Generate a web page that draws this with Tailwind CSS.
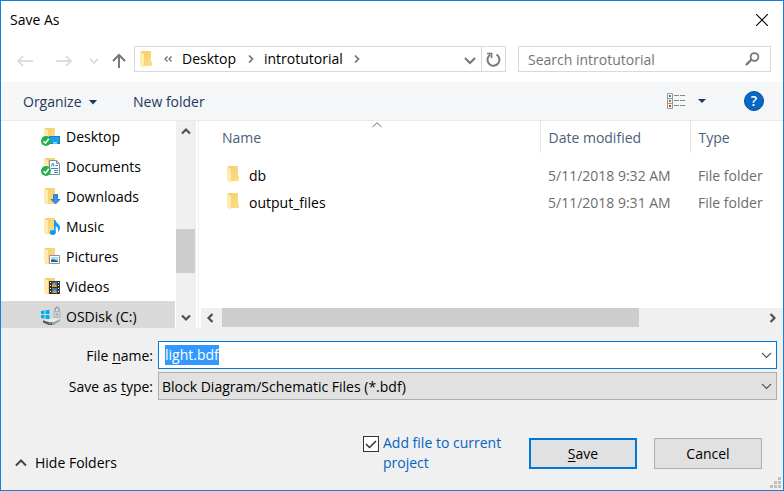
<!DOCTYPE html>
<html lang="en">
<head>
<meta charset="utf-8">
<title>Save As</title>
<script src="https://cdn.jsdelivr.net/npm/@tailwindcss/browser@4"></script>
</head>
<body class="font-['Open_Sans','Noto_Sans',sans-serif] text-sm leading-5 text-black">
<svg class="absolute size-0" aria-hidden="true">
  <defs>
    <linearGradient id="gold" x1="0" y1="0" x2="1" y2="1"><stop offset="0" stop-color="#f0cd6c"/><stop offset="1" stop-color="#ffe08a"/></linearGradient>
    <symbol id="folder" viewBox="0 0 12 17"><path d="M1 0H11V10L12 11V15H1Z" fill="url(#gold)"/><path d="M0 0.500L4 3V17L0 14.500Z" fill="#ffeab0"/></symbol>
    <symbol id="side-folder" viewBox="0 0 20 20"><path d="M4 2H14V18H4Z" fill="url(#gold)"/><path d="M3 2L7 4.500V18.500L3 16Z" fill="#ffeab0"/></symbol>
    <symbol id="synced" viewBox="0 0 20 20"><circle cx="5" cy="15" r="5" fill="#27ae4d"/><path d="M2.500 15.200L4.500 17.200L7.800 12.700" fill="none" stroke="#fff" stroke-width="1.500"/></symbol>
  </defs>
</svg>
<main class="flex min-h-screen flex-col border border-[#1a7fd4] bg-white">
  <header class="flex h-[38px] items-center justify-between pr-[11px] pl-[9px]">
    <h1>Save As</h1>
    <button aria-label="Close" class="p-1"><svg class="size-3" viewBox="0 0 12 12" fill="none" stroke="#000" stroke-width="1.1"><path d="M0 0L12 12M12 0L0 12"/></svg></button>
  </header>

  <nav class="flex h-[43px] items-start gap-3 pt-[7px] pr-3 pl-4">
    <div class="flex h-[26px] shrink-0 items-center pt-1">
      <button aria-label="Back"><svg width="16" height="12" viewBox="0 0 16 12" fill="none" stroke="#dcdcdc" stroke-width="1.800"><path d="M16 6H1M6 1L1 6L6 11"/></svg></button>
      <button aria-label="Forward" class="ml-[23px]"><svg width="16" height="12" viewBox="0 0 16 12" fill="none" stroke="#dcdcdc" stroke-width="1.800"><path d="M0 6H15M10 1L15 6L10 11"/></svg></button>
      <button aria-label="Recent locations" class="ml-[17px]"><svg width="10" height="6" viewBox="0 0 10 6" fill="none" stroke="#dcdcdc" stroke-width="1.800"><path d="M1 1L5 5L9 1"/></svg></button>
    </div>
    <div class="flex flex-1 items-center gap-2">
      <button aria-label="Up" class="pt-1 pl-px"><svg width="14" height="16" viewBox="0 0 14 16" fill="none" stroke="#777" stroke-width="2"><path d="M7 15V2M1 8L7 2L13 8"/></svg></button>
      <div class="flex h-[26px] flex-1 border border-[#d9d9d9]">
        <div class="flex flex-1 items-center pl-[5px]">
          <svg width="12" height="17"><use href="#folder"/></svg>
          <button aria-label="Parent folders" class="ml-3"><svg width="8" height="6" viewBox="0 0 8 6" fill="none" stroke="#666" stroke-width="1.200"><path d="M3.500 0.500L1 3L3.500 5.500M7.500 0.500L5 3L7.500 5.500"/></svg></button>
          <a href="#" class="ml-[10px] w-[66px]">Desktop</a>
          <svg width="6" height="8" viewBox="0 0 6 8" fill="none" stroke="#777" stroke-width="1.700"><path d="M1 0.500L4.500 4L1 7.500"/></svg>
          <a href="#" class="ml-[10px] w-[90px]">introtutorial</a>
          <svg width="6" height="8" viewBox="0 0 6 8" fill="none" stroke="#777" stroke-width="1.700"><path d="M1 0.500L4.500 4L1 7.500"/></svg>
        </div>
        <button aria-label="Previous locations" class="px-[5px] pt-1"><svg width="12" height="8" viewBox="0 0 12 8" fill="none" stroke="#777" stroke-width="2"><path d="M1 1L6 6L11 1"/></svg></button>
        <button aria-label="Refresh" class="border-l border-[#d9d9d9] px-1"><svg width="15" height="15" viewBox="0 0 15 15" fill="none" stroke="#777" stroke-width="2"><path d="M10.500 2.500A6 6 0 1 1 4 2.800"/><path d="M1 1.500H5.500V6" stroke-width="1.700"/></svg></button>
      </div>
    </div>
    <label class="flex h-[26px] w-[253px] shrink-0 items-center border border-[#d9d9d9] pr-[10px] pl-[9px]">
      <input type="search" aria-label="Search introtutorial" placeholder="Search introtutorial" class="min-w-0 flex-1 pt-0.5 outline-none placeholder:text-[#757575]">
      <svg width="15" height="14" viewBox="0 0 15 14" fill="none" stroke="#777"><circle cx="9.500" cy="5" r="3.900" stroke-width="1.800"/><path d="M6.500 7.500L1 13" stroke-width="2.400"/></svg>
    </label>
  </nav>

  <div class="flex h-[39px] items-center border-b border-[#e8e9ea] bg-[#f5f6f7] pr-[19px] pl-[22px] text-[#1e395b]">
    <button class="flex w-[74px] items-center justify-between pt-0.5">Organize <svg width="8" height="5" viewBox="0 0 8 5" fill="#1e395b"><path d="M0 0H8L4 4.500Z"/></svg></button>
    <button class="ml-9 pt-0.5">New folder</button>
    <button aria-label="Change view" class="ml-auto"><svg width="19" height="17" viewBox="0 0 19 17" fill="none"><path d="M0.500 0.500H5.500V15.500H0.500ZM0.500 5.500H5.500M0.500 10.500H5.500" stroke="#999"/><path d="M7 2.500H12M13 2.500H18M7 7.500H12M13 7.500H18M7 12.500H12M13 12.500H18" stroke="#888"/><path d="M2 2H4V4H2Z" fill="#3183b9"/><path d="M2 7H4V9H2Z" fill="#897b24"/><path d="M2 12H4V14H2Z" fill="#cf3b22"/></svg></button>
    <button aria-label="More view options" class="ml-3"><svg width="8" height="4" viewBox="0 0 8 4" fill="#1e395b"><path d="M0 0H8L4 4Z"/></svg></button>
    <button aria-label="Help" class="ml-[38px] size-5 rounded-full border border-[#07519b] bg-[#0767c5] text-center text-sm leading-[18px] font-semibold text-white">?</button>
  </div>

  <section class="flex h-[207px]">
    <ul class="w-[174px] shrink-0 overflow-hidden">
      <li class="flex h-[30px] items-center gap-[5px] pl-10"><svg width="20" height="20" viewBox="0 0 20 20"><use href="#side-folder"/><path d="M8 10H19V18H8Z" fill="#19a1ed"/><path d="M8.500 10.500H18.500V17.500H8.500Z" fill="none" stroke="#147fc4"/><path d="M12 17H16" stroke="#fff"/><use href="#synced"/></svg><a href="#" class="pt-0.5">Desktop</a></li>
      <li class="flex h-[30px] items-center gap-[5px] pl-10"><svg width="20" height="20" viewBox="0 0 20 20"><use href="#side-folder"/><path d="M8.500 4.500H15.500L18.500 7.500V18.500H8.500Z" fill="#fff" stroke="#858d94"/><path d="M15.500 4.500V7.500H18.500" fill="none" stroke="#858d94"/><path d="M10 10.500L12 7L13 10.500M14.500 9.500H17M10 12.500H17M13 14.500H17M13 16.500H17" fill="none" stroke="#2788cb"/><use href="#synced"/></svg><a href="#" class="pt-0.5">Documents</a></li>
      <li class="flex h-[30px] items-center gap-[5px] pl-10"><svg width="20" height="20" viewBox="0 0 20 20"><use href="#side-folder"/><path d="M12.500 8.500H16.500V13.500H19L14.500 18L10 13.500H12.500Z" fill="#3a91df" stroke="#2b7dc8"/></svg><a href="#" class="pt-0.5">Downloads</a></li>
      <li class="flex h-[30px] items-center gap-[5px] pl-10"><svg width="20" height="20" viewBox="0 0 20 20"><use href="#side-folder"/><ellipse cx="11.700" cy="16.500" rx="3" ry="2.400" fill="#0d9bf0"/><path d="M13 4H14.500C15 7.500 19 8 19 11.500C19 13.500 18 15 17 16C17.600 13 17 11 14.700 10V17H13Z" fill="#0d9bf0"/></svg><a href="#" class="pt-0.5">Music</a></li>
      <li class="flex h-[30px] items-center gap-[5px] pl-10"><svg width="20" height="20" viewBox="0 0 20 20"><use href="#side-folder"/><path d="M8.500 9.500H18.500V17.500H8.500Z" fill="#fff" stroke="#8e9499"/><path d="M10 11H17V16H10Z" fill="#a9dbf8"/><path d="M10 14L12 13L17 15V16H10Z" fill="#24658d"/></svg><a href="#" class="pt-0.5">Pictures</a></li>
      <li class="flex h-[30px] items-center gap-[5px] pl-10"><svg width="20" height="20" viewBox="0 0 20 20"><use href="#side-folder"/><path d="M8 5H19V18H8Z" fill="#38332c"/><path d="M11 6H16V11H11ZM11 12H16V17H11Z" fill="#3979c9"/><path d="M11 9L13.500 7L16 11H11ZM11 17L14 13.500L16 17Z" fill="#d6a33b"/><path d="M9.500 6V18M17.500 6V18" stroke="#fff" stroke-dasharray="1 2"/></svg><a href="#" class="pt-0.5">Videos</a></li>
      <li class="flex h-[30px] items-center gap-[5px] bg-[#d9d9d9] pl-10"><svg width="20" height="20" viewBox="0 0 20 20"><path d="M2 14L14 12L19 13V15L13 19H8L2 16Z" fill="#e8eaeb"/><path d="M2 14L8 16H13L19 13V15L13 19H8L2 16Z" fill="#9ba0a4"/><path d="M2 14.500L8 16.500H11V19H8L2 16.500Z" fill="#53575a"/><path d="M8 17.500H10" stroke="#45d06a"/><path d="M0 5L3.500 4.500V8H0ZM4.500 4.300L8.500 3.800V8H4.500ZM0 9H3.500V12.500L0 12ZM4.500 9H8.500V13.200L4.500 12.700Z" fill="#00adef"/><path d="M14 6V3Q16 -0.500 18 3V6" fill="none" stroke="#929ca3" stroke-width="1.300"/><path d="M13 5.500H19V11.500H13Z" fill="#c9d2d8" stroke="#a2abb1" stroke-width=".7"/><path d="M16 7.500V9.500" stroke="#68737b"/></svg><a href="#" class="pt-0.5">OSDisk (C:)</a></li>
    </ul>
    <div class="ml-px flex w-5 shrink-0 flex-col bg-[#f0f0f0]">
      <button aria-label="Scroll up" class="flex h-5 items-center justify-center pr-px"><svg width="10" height="8" viewBox="0 0 10 8" fill="none" stroke="#505050" stroke-width="2.200"><path d="M1 6.500L5 2.500L9 6.500"/></svg></button>
      <div class="flex-[88]"></div>
      <div class="mr-px h-11 bg-[#cdcdcd]"></div>
      <div class="flex-[35]"></div>
      <button aria-label="Scroll down" class="flex h-5 items-center justify-center pr-px"><svg width="10" height="8" viewBox="0 0 10 8" fill="none" stroke="#505050" stroke-width="2.200"><path d="M1 1.500L5 5.500L9 1.500"/></svg></button>
    </div>
    <div class="ml-[2px] flex min-w-0 flex-1 flex-col border-l border-[#f0f0f0]">
      <table class="w-full table-fixed border-collapse text-left text-[#6d6d6d]">
        <colgroup><col><col class="w-[150px]"><col class="w-[93px]"></colgroup>
        <thead class="text-[#4c607a]">
          <tr class="h-8">
            <th class="relative pt-0.5 pl-[23px] font-normal">Name<svg class="absolute top-px left-[173px]" width="10" height="6" viewBox="0 0 10 6" fill="none" stroke="#666"><path d="M0.500 5L5 0.800L9.500 5"/></svg></th>
            <th class="border-l border-[#e5e5e5] pt-0.5 pl-2 font-normal">Date modified</th>
            <th class="border-l border-[#e5e5e5] pt-0.5 pl-2 font-normal">Type</th>
          </tr>
        </thead>
        <tbody>
          <tr><td colspan="3" class="h-2 p-0"></td></tr>
          <tr class="h-[27px]"><td class="pl-7 text-black"><div class="flex items-center gap-[10px]"><svg width="12" height="17"><use href="#folder"/></svg><span class="pt-0.5">db</span></div></td><td class="pt-0.5 pl-2">5/11/2018 9:32 AM</td><td class="pt-0.5 pl-2">File folder</td></tr>
          <tr class="h-[27px]"><td class="pl-7 text-black"><div class="flex items-center gap-[10px]"><svg width="12" height="17"><use href="#folder"/></svg><span class="pt-0.5">output_files</span></div></td><td class="pt-0.5 pl-2">5/11/2018 9:31 AM</td><td class="pt-0.5 pl-2">File folder</td></tr>
        </tbody>
      </table>
      <div class="mt-auto ml-[2px] flex h-5 bg-[#f0f0f0]">
        <button aria-label="Scroll left" class="flex w-[21px] items-center justify-center pr-1"><svg width="8" height="10" viewBox="0 0 8 10" fill="none" stroke="#505050" stroke-width="2.200"><path d="M6.500 1L2.500 5L6.500 9"/></svg></button>
        <div class="mb-px flex-[417] bg-[#cdcdcd]"></div>
        <div class="flex-[123]"></div>
        <button aria-label="Scroll right" class="flex w-[21px] items-center justify-center"><svg width="8" height="10" viewBox="0 0 8 10" fill="none" stroke="#505050" stroke-width="2.200"><path d="M1.500 1L5.500 5L1.500 9"/></svg></button>
      </div>
    </div>
  </section>

  <form class="relative flex flex-1 flex-col bg-[#f0f0f0] pt-[13px]">
    <div class="grid grid-cols-[152px_1fr] items-center gap-x-[5px] gap-y-[3px] pr-[6px]">
      <label for="filename" class="pt-0.5 text-right">File <u class="underline-offset-2">n</u>ame:</label>
      <div class="flex h-7 items-center border border-[#0078d7] bg-white pr-1 pl-[6px]">
        <input id="filename" value="light.bdf" autofocus class="h-5 min-w-0 flex-1 leading-5 outline-none selection:bg-[#3399ff] selection:text-white">
        <button type="button" aria-label="Show recent names"><svg width="11" height="7" viewBox="0 0 11 7" fill="none" stroke="#555" stroke-width="1.200"><path d="M1 1L5.500 5.500L10 1"/></svg></button>
      </div>
      <label for="filetype" class="pt-0.5 text-right">Save as <u class="underline-offset-2">t</u>ype:</label>
      <div class="grid items-center">
        <select id="filetype" class="col-start-1 row-start-1 h-7 appearance-none border border-[#adadad] bg-[#e1e1e1] pt-0.5 pr-6 pl-[3px]"><option>Block Diagram/Schematic Files (*.bdf)</option></select>
        <svg class="pointer-events-none col-start-1 row-start-1 mr-[5px] justify-self-end" width="11" height="7" viewBox="0 0 11 7" fill="none" stroke="#555" stroke-width="1.200"><path d="M1 1L5.500 5.500L10 1"/></svg>
      </div>
    </div>
    <div class="mt-auto flex items-end pr-[21px] pb-[17px] pl-[14px]">
      <button type="button" class="flex items-center gap-2"><svg width="12" height="8" viewBox="0 0 12 8" fill="none" stroke="#444" stroke-width="2"><path d="M1 6.500L6 1.500L11 6.500"/></svg>Hide Folders</button>
      <div class="ml-auto flex items-start gap-1">
        <span class="mt-[3px] grid size-4">
          <input id="addfile" type="checkbox" checked class="peer col-start-1 row-start-1 size-4 appearance-none border border-[#333] bg-white">
          <svg class="pointer-events-none col-start-1 row-start-1 hidden peer-checked:block" width="16" height="16" viewBox="0 0 16 16" fill="none" stroke="#333" stroke-width="1.500"><path d="M3 8L6.500 11.500L13 5"/></svg>
        </span>
        <label for="addfile" class="w-[130px] text-[#0563c1]">Add file to current project</label>
      </div>
      <button class="mb-1 ml-4 h-[31px] w-[108px] border-2 border-[#0078d7] bg-[#e1e1e1]"><u class="underline-offset-2">S</u>ave</button>
      <button type="button" class="mb-1 ml-[17px] h-[31px] w-[108px] border border-[#adadad] bg-[#e1e1e1]">Cancel</button>
    </div>
    <svg class="absolute right-[2px] bottom-[2px]" width="11" height="11" viewBox="0 0 11 11" fill="#bfbfbf"><path d="M8 0H11V3H8ZM4 4H7V7H4ZM8 4H11V7H8ZM0 8H3V11H0ZM4 8H7V11H4ZM8 8H11V11H8Z"/></svg>
  </form>
</main>
<script>
  const filename = document.getElementById('filename');
  filename.focus();
  filename.select();
</script>
</body>
</html>
